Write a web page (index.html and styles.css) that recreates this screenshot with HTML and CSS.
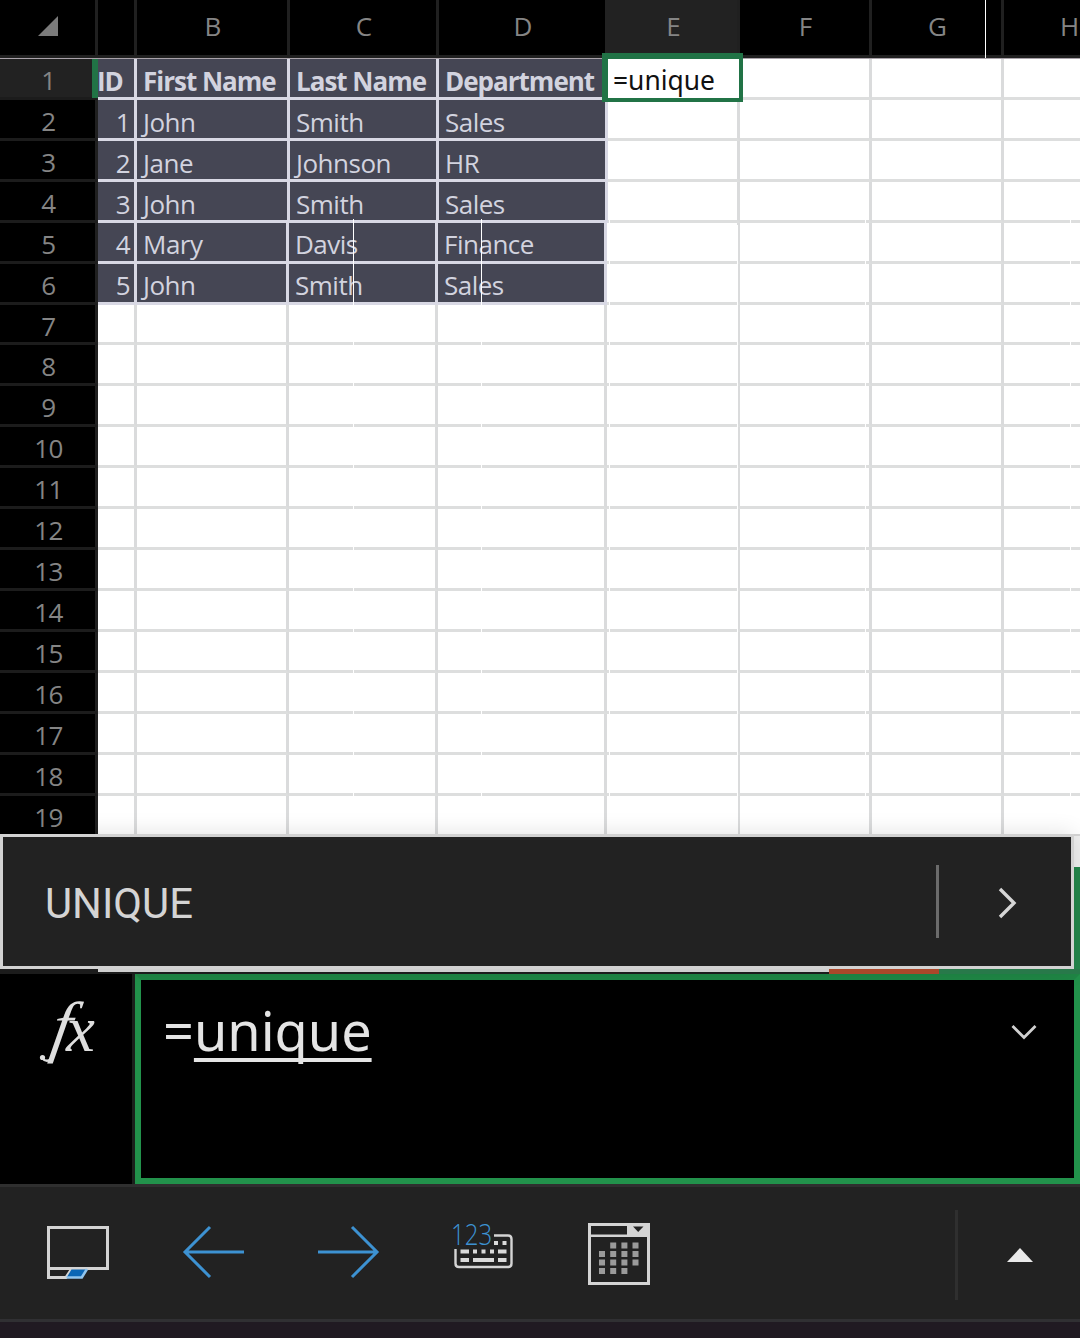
FILE: index.html
```html
<!DOCTYPE html>
<html lang="en">
<head>
<meta charset="utf-8">
<title>Spreadsheet</title>
<link rel="stylesheet" href="styles.css">
</head>
<body>
<main class="app">
  <section class="sheet">
    <div class="row head">
      <div class="corner"><svg width="20" height="20" viewBox="0 0 20 20"><path d="M20 0V20H0Z" fill="#7b7b7b"/></svg></div>
      <div></div><div>B</div><div>C</div><div>D</div><div class="active">E</div><div>F</div><div>G</div><div>H</div>
    </div>
    <div class="row title"><b class="active">1</b><i class="t id">ID</i><i class="t">First Name</i><i class="t">Last Name</i><i class="t">Department</i><i></i><i></i><i></i><i></i></div>
    <div class="row"><b>2</b><i class="t num">1</i><i class="t">John</i><i class="t">Smith</i><i class="t">Sales</i><i></i><i></i><i></i><i></i></div>
    <div class="row"><b>3</b><i class="t num">2</i><i class="t">Jane</i><i class="t">Johnson</i><i class="t">HR</i><i></i><i></i><i></i><i></i></div>
    <div class="row"><b>4</b><i class="t num">3</i><i class="t">John</i><i class="t">Smith</i><i class="t">Sales</i><i></i><i></i><i></i><i></i></div>
    <div class="row low"><b>5</b><i class="t num">4</i><i class="t">Mary</i><i class="t">Davis</i><i class="t">Finance</i><i></i><i></i><i></i><i></i></div>
    <div class="row low"><b>6</b><i class="t num">5</i><i class="t">John</i><i class="t">Smith</i><i class="t">Sales</i><i></i><i></i><i></i><i></i></div>
    <div class="row low"><b>7</b><i></i><i></i><i></i><i></i><i></i><i></i><i></i><i></i></div>
    <div class="row low"><b>8</b><i></i><i></i><i></i><i></i><i></i><i></i><i></i><i></i></div>
    <div class="row low"><b>9</b><i></i><i></i><i></i><i></i><i></i><i></i><i></i><i></i></div>
    <div class="row low"><b>10</b><i></i><i></i><i></i><i></i><i></i><i></i><i></i><i></i></div>
    <div class="row low"><b>11</b><i></i><i></i><i></i><i></i><i></i><i></i><i></i><i></i></div>
    <div class="row low"><b>12</b><i></i><i></i><i></i><i></i><i></i><i></i><i></i><i></i></div>
    <div class="row low"><b>13</b><i></i><i></i><i></i><i></i><i></i><i></i><i></i><i></i></div>
    <div class="row low"><b>14</b><i></i><i></i><i></i><i></i><i></i><i></i><i></i><i></i></div>
    <div class="row low"><b>15</b><i></i><i></i><i></i><i></i><i></i><i></i><i></i><i></i></div>
    <div class="row low"><b>16</b><i></i><i></i><i></i><i></i><i></i><i></i><i></i><i></i></div>
    <div class="row low"><b>17</b><i></i><i></i><i></i><i></i><i></i><i></i><i></i><i></i></div>
    <div class="row low"><b>18</b><i></i><i></i><i></i><i></i><i></i><i></i><i></i><i></i></div>
    <div class="row low"><b>19</b><i></i><i></i><i></i><i></i><i></i><i></i><i></i><i></i></div>
    <div class="marker"></div>
    <div class="seam s1"></div><div class="seam s2"></div><div class="seam s3"></div><div class="seam s4"></div><div class="seam s5"></div><div class="seam s6"></div><div class="seam top"></div>
    <div class="editing">=unique</div>
  </section>

  <section class="suggest">
    <div class="popup">
      <span class="name">UNIQUE</span>
      <span class="rule"></span>
      <svg class="next" width="20" height="32" viewBox="0 0 20 32"><path d="M2 2L16 16L2 30" fill="none" stroke="#d6d6d6" stroke-width="3.400"/></svg>
    </div>
    <div class="edge"><span></span></div>
  </section>
  <div class="strip"><span class="grey"></span><span class="red"></span><span class="green"></span></div>

  <section class="formula">
    <div class="fx">
      <svg width="132" height="110" viewBox="0 0 132 110">
        <text transform="translate(49 75) skewX(-10)" font-size="68">f</text>
        <text x="66" y="77" font-size="65">x</text>
        <path d="M51 85.500Q46 88.500 42.500 84.500" fill="none" stroke="#dedede" stroke-width="2.400"/>
        <circle cx="42.500" cy="83.500" r="2.600" fill="#dedede"/>
      </svg>
    </div>
    <div class="input">
      <span class="text">=<u>unique</u></span>
      <svg width="28" height="18" viewBox="0 0 28 18"><path d="M2.5 3L14 14.5L25.5 3" fill="none" stroke="#d0d0d0" stroke-width="2.8"/></svg>
    </div>
  </section>

  <nav class="tools">
    <svg class="ic display" width="64" height="56" viewBox="0 0 64 56">
      <path d="M2.5 2.5H61.5V43.5H2.5ZM2.5 43.5V52.5H20L26 43.5" fill="none" stroke="#d4d4d4" stroke-width="3"/>
      <path d="M25.5 44.5H40.5L35.8 52.3H20.8Z" fill="#0a66b5"/>
      <path d="M41 44L35.8 52.5H20.5" fill="none" stroke="#90c5ee" stroke-width="2.6"/>
    </svg>
    <svg class="ic back" width="64" height="54" viewBox="0 0 64 54"><path d="M62 27H3M28 2L3 27L28 52" fill="none" stroke="#3d92d2" stroke-width="3"/></svg>
    <svg class="ic fwd" width="64" height="54" viewBox="0 0 64 54"><path d="M2 27H61M36 2L61 27L36 52" fill="none" stroke="#3d92d2" stroke-width="3"/></svg>
    <div class="ic keys">
      <svg width="64" height="48" viewBox="0 0 64 48">
        <path d="M42 12.5H56Q59.500 12.500 59.500 16V40.500Q59.500 44 56 44H7Q3.500 44 3.500 40.500V26" fill="none" stroke="#d4d4d4" stroke-width="2.4"/>
        <path d="M42 18h4v4h-4zM50.500 18h4v4h-4zM8.500 26.500h8.500v4H8.500zM21 26.500h4v4h-4zM29.500 26.500h4v4h-4zM38 26.500h4v4h-4zM46 26.500h8.500v4H46zM8.500 35h8.500v4H8.500zM21 35h21v4H21zM46 35h8.500v4H46z" fill="#dadada"/>
      </svg>
      <span>123</span>
    </div>
    <svg class="ic date" width="62" height="62" viewBox="0 0 62 62">
      <path d="M1.500 1.500H60.500V60.500H1.500Z" fill="none" stroke="#d4d4d4" stroke-width="3"/>
      <path d="M2 11.500H60V14H2ZM39 2H60V13H39Z" fill="#d4d4d4"/>
      <path d="M45 3.500H55.500L50.200 9Z" fill="#222"/>
      <path d="M22.200 19.500h6v6h-6zM33.400 19.500h6v6h-6zM44.500 19.500h6v6h-6zM11 28h6v6h-6zM22.200 28h6v6h-6zM33.400 28h6v6h-6zM44.500 28h6v6h-6zM11 36.500h6v6h-6zM22.200 36.500h6v6h-6zM33.400 36.500h6v6h-6zM44.500 36.500h6v6h-6zM11 45h6v6h-6zM22.200 45h6v6h-6zM33.400 45h6v6h-6z" fill="#9b9b9b"/>
    </svg>
    <span class="divider"></span>
    <svg class="up" width="26" height="14" viewBox="0 0 26 14"><path d="M13 0L26 14H0Z" fill="#eaeaea"/></svg>
  </nav>
  <div class="base"></div>
</main>
</body>
</html>
```
FILE: styles.css
```css
* { box-sizing: border-box; }
body { margin: 0; background: #000; }
svg { display: block; flex: none; }

.app {
  width: 1080px;
  height: 1338px;
  display: flex;
  flex-direction: column;
  overflow: hidden;
}

/* Cell grid */
.sheet {
  position: relative;
  height: 834px;
  flex: none;
  overflow: hidden;
  background: #fff;
  font: 26px "Open Sans", "Noto Sans", sans-serif;
}
.row {
  display: grid;
  grid-template-columns: 98px 39px 153px 149px 169px 132px 132px 132px 132px;
  grid-template-rows: 100%;
  width: 1136px;
  height: 40.93px;
  line-height: 44px;
}
.row.low {
  grid-template-columns: 98px 39px 152px 149px 169px 133px 132px 132px 132px;
  line-height: 43px;
}
.row > * {
  font-style: normal;
  font-weight: 400;
  min-width: 0;
  white-space: nowrap;
}
.row i {
  border-right: 3px solid #dadbdc;
  border-bottom: 3px solid #dddede;
}
.row b {
  background: #000;
  color: #858585;
  text-align: center;
  letter-spacing: -0.6px;
  line-height: 43px;
  padding-left: 2px;
  border-right: 3px solid #202020;
  border-bottom: 3px solid #1c1c1c;
}
.row b.active { background: #222; }
.row .t {
  background: #454654;
  border-color: #d8d8e4;
  color: #d2d3df;
  padding-left: 6px;
  letter-spacing: -0.5px;
}
.row .num { padding: 0 4px 0 0; text-align: right; }
.title .t { font-weight: 700; letter-spacing: -1px; line-height: 45px; }
.title .id { padding-left: 0; text-indent: -1px; }

.row.head {
  height: 59px;
  line-height: 53px;
  background: #000;
  border-bottom: 1px solid #a9a2a9;
}
.head > * {
  color: #858585;
  text-align: center;
  padding-left: 2px;
  border-right: 3px solid #202020;
  border-bottom: 3px solid #202020;
}
.head .corner { padding: 16px 0 0 38px; }
.head > .active { background: #222; margin-left: -3px; padding-left: 5px; }

.marker {
  position: absolute;
  left: 92px; top: 59px;
  width: 6px; height: 39px;
  background: #217346;
}
.editing {
  position: absolute;
  left: 602px; top: 53px;
  width: 141px; height: 49px;
  border: solid #217346;
  border-width: 6px 4px 4px 6px;
  background: #fff;
  color: #111;
  font: 26.400px/43px "Noto Sans", sans-serif;
  padding-left: 5px;
}
.seam {
  position: absolute;
  top: 219px; bottom: 0;
  width: 1px;
  background: #fff;
}
.s1 { left: 353px; }
.s2 { left: 481px; }
.s3 { left: 609px; }
.s4 { left: 737px; top: 225px; }
.s5 { left: 865px; }
.s6 { left: 1070px; }
.seam.top { left: 985px; top: 0; bottom: auto; height: 58px; }

/* Function suggestion */
.suggest { display: flex; height: 135px; flex: none; }
.popup {
  position: relative;
  width: 1074px;
  display: flex;
  align-items: center;
  padding: 0 52px 0 42px;
  background: #222;
  border: 3px solid #d2d2d2;
  box-shadow: 0 0 22px rgba(0, 0, 0, .12);
}
.name {
  flex: 1;
  padding-top: 4px;
  color: #d4d4d4;
  font: 41.800px/50px Roboto, sans-serif;
}
.rule { width: 3px; height: 73px; background: #6b6b6b; margin-right: 60px; }
.next { margin: 3px 1px 0 -1px; }
.edge { width: 6px; background: #24874c; }
.edge span {
  display: block;
  height: 33px;
  background: #f0f0f0;
  border-top: 2px solid #d6d6d6;
}
.strip {
  position: relative;
  display: flex;
  height: 5px;
  flex: none;
  padding-left: 98px;
  background: #1c1c1c;
}
.grey { width: 731px; height: 3px; background: #cfcfcf; }
.red { width: 110px; background: #ab472a; }
.green { flex: 1; background: #28794a; }

/* Formula bar */
.formula { display: flex; height: 210px; flex: none; }
.fx {
  width: 135px;
  border-right: 3px solid #1b201c;
}
.fx text {
  fill: #dedede;
  font-family: "Liberation Serif", serif;
  font-style: italic;
}
.input {
  flex: 1;
  display: flex;
  justify-content: space-between;
  align-items: flex-start;
  border: 6px solid #22924b;
  border-top-color: #1f8645;
  padding: 0 36px 0 22px;
}
.text {
  color: #e4e4e4;
  font: 54px/100px "Noto Sans", sans-serif;
}
.text u {
  text-decoration-thickness: 4px;
  text-underline-offset: 7px;
  text-decoration-skip-ink: none;
}
.input svg { margin-top: 43px; }

/* Toolbar */
.tools {
  display: flex;
  align-items: flex-start;
  height: 138px;
  flex: none;
  background: #222;
  border-top: 3px solid #2f2f2f;
  border-bottom: 3px solid #303033;
  padding-left: 46px;
}
.display { margin-top: 38px; }
.back { margin: 38px 0 0 72px; }
.fwd { margin: 38px 0 0 70px; }
.keys { position: relative; margin: 36px 0 0 72px; }
.keys span {
  position: absolute;
  left: -1px; top: -13px;
  color: #3d92d2;
  font: 300 29px/48px "Open Sans", sans-serif;
  transform: scaleX(.83);
  transform-origin: 0 0;
}
.date { margin: 36px 0 0 72px; }
.divider { width: 3px; height: 90px; background: #2f2f2f; margin: 23px 0 0 305px; }
.up { margin: 61px 0 0 49px; }
.base { flex: 1; background: #201a22; }
```
